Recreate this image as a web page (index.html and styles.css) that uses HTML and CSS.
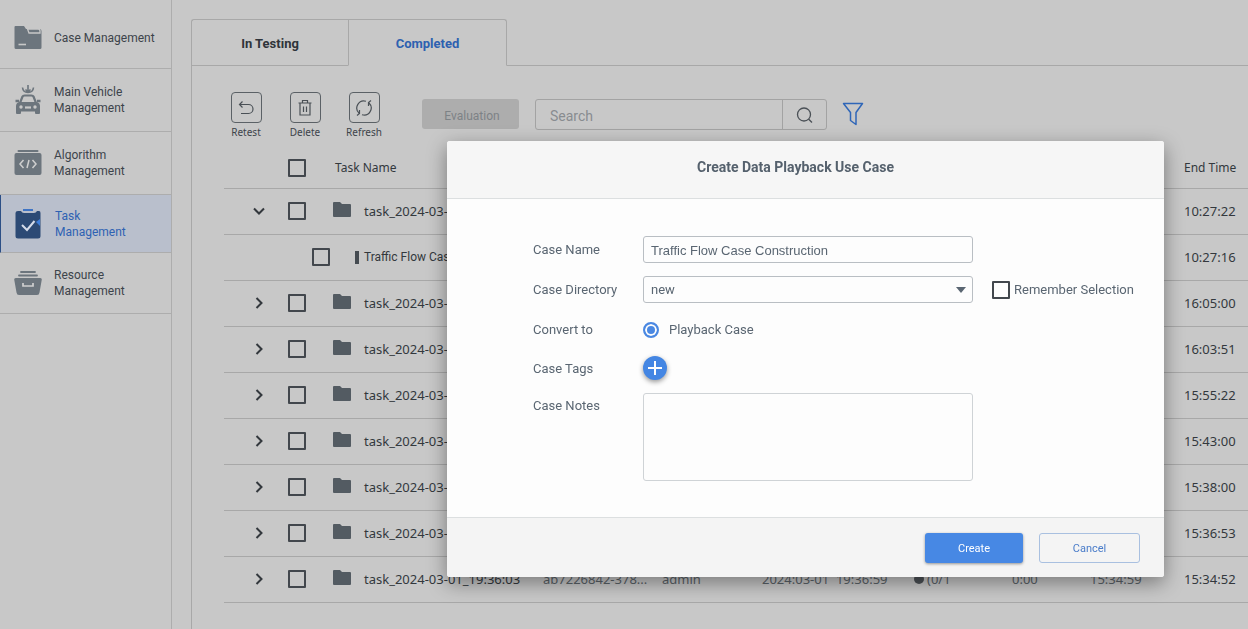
FILE: index.html
```html
<!DOCTYPE html>
<html lang="en">
<head>
  <meta charset="UTF-8" />
  <meta name="viewport" content="width=device-width, initial-scale=1.0" />
  <title>Task Management</title>
  <link rel="stylesheet" href="styles.css">
</head>
<body>

  <!-- shared icons -->
  <svg class="sprite" aria-hidden="true">
    <symbol id="folder" viewBox="0 0 18 15">
      <path d="M1 0H7L9 2H17Q18 2 18 3V14Q18 15 17 15H1Q0 15 0 14V1Q0 0 1 0Z" fill="currentColor" />
    </symbol>
    <symbol id="chevron" viewBox="0 0 12 12">
      <path d="M3.500 1L8.500 6L3.500 11" fill="none" stroke="currentColor" stroke-width="2" />
    </symbol>
  </svg>

  <div class="layout">
    <nav class="sidebar">
      <ul>
        <li><a href="#">
          <svg width="28" height="26" viewBox="0 0 28 26">
            <path d="M1.500 1H10l2 3H25.500Q27.500 4 27.500 6V22.500Q27.500 24 26 24H2Q.5 24 .5 22.500V2Q.5 1 1.500 1Z" fill="#6c757d" />
            <path d="M13.500 4H24Q26 4 26 6V8H15Z" fill="#6c757d" stroke="#c8c8c8" stroke-width="1.300" />
            <path d="M4.500 19.500H12" stroke="#c8c8c8" stroke-width="1.600" />
          </svg>
          <span>Case Management</span>
        </a></li>
        <li><a href="#">
          <svg width="28" height="32" viewBox="0 0 28 32">
            <g fill="none" stroke="#6c757d" stroke-width="1.600">
              <path d="M14 1V8M11.500 5.500L14 8L16.500 5.500M8.500 3.500Q9 8.500 14 8.500Q19 8.500 19.500 3.500" />
              <path d="M6 19L8.500 12.500Q9 11.500 10.500 11.500H17.500Q19 11.500 19.500 12.500L22 19" stroke-width="2.200" />
              <path d="M1.500 17H5M23 17H26.500" stroke-width="2.400" />
            </g>
            <path d="M5 18H23Q26 19 26 22V29Q26 30 25 30H22Q21 30 21 29V27.500H7V29Q7 30 6 30H3Q2 30 2 29V22Q2 19 5 18Z" fill="#6c757d" />
            <circle cx="7" cy="23" r="1.700" fill="#c8c8c8" />
            <circle cx="21" cy="23" r="1.700" fill="#c8c8c8" />
            <path d="M11 23.500H17" stroke="#c8c8c8" stroke-width="2.200" />
          </svg>
          <span>Main Vehicle<br>Management</span>
        </a></li>
        <li><a href="#">
          <svg width="28" height="28" viewBox="0 0 28 28">
            <path d="M4.500 2H23.500" stroke="#6c757d" stroke-width="2" stroke-linecap="round" />
            <rect x=".5" y="4" width="27" height="22" rx="2" fill="#6c757d" />
            <path d="M9.500 11L6 15L9.500 19M18.500 11L22 15L18.500 19M15 11L13 19" fill="none" stroke="#cfcfcf" stroke-width="1.500" />
          </svg>
          <span>Algorithm<br>Management</span>
        </a></li>
        <li class="active"><a href="#">
          <svg width="28" height="30" viewBox="0 0 28 30">
            <path d="M3 2H6Q7 4 9 4H19Q21 4 22 2H24Q25.500 2 25.500 4V27Q25.500 29.500 23 29.500H3Q.5 29.500 .5 27V4Q.5 2 3 2Z" fill="#2c4a75" />
            <path d="M8 1H18" stroke="#3f74c4" stroke-width="2" />
            <path d="M21 13l4-3v7Z" fill="#3f7fdc" />
            <path d="M7 16L12 21L19.500 12" fill="none" stroke="#d5dcea" stroke-width="2" />
          </svg>
          <span>Task<br>Management</span>
        </a></li>
        <li><a href="#">
          <svg width="28" height="26" viewBox="0 0 28 26">
            <path d="M7 2H21M5 5.500H23" stroke="#6c757d" stroke-width="1.800" stroke-linecap="round" />
            <path d="M1.800 8H26.200Q28 8 27.800 9.500L25.500 22.500Q25.200 25 23 25H5Q2.800 25 2.500 22.500L.2 9.500Q0 8 1.800 8Z" fill="#6c757d" />
            <path d="M9 13V16H19V13" fill="none" stroke="#d0d0d0" stroke-width="1.700" />
          </svg>
          <span>Resource<br>Management</span>
        </a></li>
      </ul>
    </nav>

    <main class="content">
      <div class="tabs">
        <button class="tab-button">In Testing</button>
        <button class="tab-button active">Completed</button>
        <div class="tabs-rest"></div>
      </div>

      <div class="panel">
        <div class="toolbar">
          <div class="tools">
            <button class="tool">
              <span class="tool-icon">
                <svg width="16" height="16" viewBox="0 0 16 16"><path d="M4.500 1.500L1.500 4.500L4.500 7.500M1.500 4.500H10.500A4.500 4.500 0 0 1 10.500 13.500H3" /></svg>
              </span>
              Retest
            </button>
            <button class="tool">
              <span class="tool-icon">
                <svg width="16" height="18" viewBox="0 0 16 18"><path d="M1.500 4H14.500M3 4V16H13V4M5.500 4V1.500H10.500V4M6.500 7.500V13M9.500 7.500V13" /></svg>
              </span>
              Delete
            </button>
            <button class="tool">
              <span class="tool-icon">
                <svg width="18" height="18" viewBox="0 0 18 18"><path d="M11 2.300A7 7 0 0 0 4 14M7 15.700A7 7 0 0 0 14 4M4.500 11V14.500L2 16.500M13.500 7V3.500L16 1.500" /></svg>
              </span>
              Refresh
            </button>
          </div>
          <button class="evaluation" disabled>Evaluation</button>
          <form class="search">
            <input type="text" placeholder="Search" aria-label="Search">
            <button type="button" aria-label="Search">
              <svg width="18" height="18" viewBox="0 0 18 18" fill="none" stroke="#4a5056" stroke-width="1.300"><circle cx="8" cy="8.500" r="6.500" /><path d="M12.700 13.200L16 16.500" /></svg>
            </button>
          </form>
          <button class="filter" aria-label="Filter">
            <svg width="22" height="24" viewBox="0 0 22 24" fill="none" stroke="#2f66b8" stroke-width="1.500" stroke-linejoin="round"><path d="M1.500 1.500H20.500L14 10.500V22.500L8.500 18.500V10.500Z" /></svg>
          </button>
        </div>

        <table class="task-table">
          <colgroup>
            <col class="col-expand"><col class="col-check"><col><col class="col-id"><col class="col-user">
            <col class="col-start"><col class="col-status"><col class="col-duration"><col class="col-created"><col class="col-end">
          </colgroup>
          <thead>
            <tr>
              <th></th>
              <th><input type="checkbox" aria-label="Select all"></th>
              <th class="name-head">Task Name</th>
              <th></th><th></th><th></th><th></th><th></th><th></th>
              <th>End Time</th>
            </tr>
          </thead>
          <tbody id="taskList"></tbody>
        </table>
      </div>
    </main>
  </div>

  <div class="overlay">
    <div class="modal" role="dialog" aria-labelledby="modalTitle">
      <h2 id="modalTitle">Create Data Playback Use Case</h2>
      <form class="modal-body">
        <label for="caseName">Case Name</label>
        <input type="text" id="caseName" value="Traffic Flow Case Construction">
        <span></span>

        <label for="caseDirectory">Case Directory</label>
        <div class="select-box">
          <select id="caseDirectory">
            <option>new</option>
          </select>
          <svg width="10" height="6" viewBox="0 0 10 6"><path d="M0 0H10L5 6Z" fill="#5a6672" /></svg>
        </div>
        <label class="remember"><input type="checkbox"> Remember Selection</label>

        <span>Convert to</span>
        <label class="radio"><input type="radio" name="convert" checked> Playback Case</label>
        <span></span>

        <span>Case Tags</span>
        <button type="button" class="add-tag" aria-label="Add tag">
          <svg width="14" height="14" viewBox="0 0 14 14"><path d="M7 0V14M0 7H14" stroke="#fff" stroke-width="2" /></svg>
        </button>
        <span></span>

        <label for="caseNotes" class="notes-label">Case Notes</label>
        <textarea id="caseNotes"></textarea>
        <span></span>
      </form>
      <div class="modal-footer">
        <button class="create">Create</button>
        <button class="cancel">Cancel</button>
      </div>
    </div>
  </div>

<script>
const tasks = [
  { name: 'task_2024-03-', end: '10:27:22', open: true },
  { name: 'Traffic Flow Case', end: '10:27:16', child: true },
  { name: 'task_2024-03-', end: '16:05:00' },
  { name: 'task_2024-03-', end: '16:03:51' },
  { name: 'task_2024-03-', end: '15:55:22' },
  { name: 'task_2024-03-', end: '15:43:00' },
  { name: 'task_2024-03-', end: '15:38:00' },
  { name: 'task_2024-03-', end: '15:36:53' },
  {
    name: 'task_2024-03-01_19:36:03', id: 'ab7226842-378...', user: 'admin', start: '2024:03-01&nbsp; 19:36:59',
    status: '<i class="dot"></i>(0/1', duration: '0:00', created: '15:34:59', end: '15:34:52'
  }
];

function renderTasks() {
  const list = document.getElementById('taskList');
  tasks.forEach(t => {
    const row = document.createElement('tr');
    if (t.child) row.className = 'child';
    const arrow = t.child ? '' : `<button class="expand ${t.open ? 'open' : ''}" aria-label="Expand"><svg width="12" height="12"><use href="#chevron" /></svg></button>`;
    const icon = t.child ? '<i class="bar"></i>' : '<svg width="18" height="15"><use href="#folder" /></svg>';
    row.innerHTML = `
      <td>${arrow}</td>
      <td><input type="checkbox" aria-label="Select task"></td>
      <td><div class="name">${icon}<span>${t.name}</span></div></td>
      <td class="muted">${t.id || ''}</td>
      <td class="muted">${t.user || ''}</td>
      <td class="muted">${t.start || ''}</td>
      <td class="muted">${t.status || ''}</td>
      <td class="muted">${t.duration || ''}</td>
      <td class="muted">${t.created || ''}</td>
      <td>${t.end}</td>`;
    list.appendChild(row);
  });
}

renderTasks();
</script>

</body>
</html>
```
FILE: styles.css
```css
* { margin: 0; padding: 0; box-sizing: border-box; }

body {
  font-family: Roboto, sans-serif;
  font-size: 13px;
  background: #c8c8c8;
  color: #3d444b;
  overflow: hidden;
}

button, input, select, textarea {
  font: inherit;
  color: inherit;
  background: none;
  border: none;
  outline: none;
}

button { cursor: pointer; }
svg { display: block; flex: none; }
.sprite { display: none; }

.layout {
  display: flex;
  min-height: 100vh;
}

/* sidebar */
.sidebar {
  flex: none;
  width: 172px;
  border-right: 1px solid #adadad;
}

.sidebar ul { list-style: none; }

.sidebar li {
  height: 63px;
  border-bottom: 1px solid #adadad;
}

.sidebar li:first-child {
  height: 69px;
  padding-top: 8px;
}

.sidebar li:last-child { height: 61px; }

.sidebar a {
  display: flex;
  align-items: center;
  gap: 12px;
  height: 100%;
  padding-left: 14px;
  color: #3d444b;
  font-size: 12px;
  line-height: 16px;
  text-decoration: none;
  white-space: nowrap;
}

.sidebar li.active {
  height: 58px;
  background: #b9bfcc;
  border-left: 1px solid #2c4f86;
}

.sidebar .active a { color: #2e62b3; }

/* tabs */
.content {
  flex: 1;
  min-width: 0;
  padding: 19px 0 0 19px;
}

.tabs { display: flex; }

.tab-button {
  width: 157px;
  height: 47px;
  border: 1px solid #a8a8a8;
  border-right: none;
  border-radius: 3px 0 0 0;
  font-weight: 700;
  color: #2f343a;
  padding-top: 2px;
}

.tab-button.active {
  width: 159px;
  border-right: 1px solid #a8a8a8;
  border-bottom-color: transparent;
  border-radius: 0 3px 0 0;
  color: #2d61b0;
}

.tabs-rest {
  flex: 1;
  border-bottom: 1px solid #a8a8a8;
}

.panel {
  min-height: calc(100vh - 66px);
  border-left: 1px solid #a8a8a8;
  padding: 26px 0 0 32px;
}

/* toolbar */
.toolbar {
  display: flex;
  align-items: flex-start;
  padding-bottom: 7px;
}

.tools {
  display: flex;
  gap: 15px;
  width: 198px;
}

.tool {
  display: flex;
  flex-direction: column;
  align-items: center;
  gap: 1px;
  width: 44px;
  font-family: "Noto Sans", sans-serif;
  font-size: 10px;
  line-height: 17px;
}

.tool-icon {
  display: flex;
  align-items: center;
  justify-content: center;
  width: 31px;
  height: 31px;
  border: 1px solid #5b6166;
  border-radius: 4px;
}

.tool-icon svg {
  fill: none;
  stroke: #4a5056;
  stroke-width: 1.2;
}

.evaluation {
  width: 97px;
  height: 30px;
  margin-top: 7px;
  padding: 3px 0 0 3px;
  border-radius: 3px;
  background: #adadad;
  color: #7d8286;
  font-size: 12px;
}

.search {
  display: flex;
  width: 292px;
  height: 31px;
  margin: 7px 0 0 16px;
  border: 1px solid #a3a3a3;
  border-radius: 3px;
}

.search input {
  flex: 1;
  min-width: 0;
  padding: 2px 0 0 14px;
  font-size: 14px;
}

.search input::placeholder { color: #888c90; }

.search button {
  width: 44px;
  display: flex;
  align-items: center;
  justify-content: center;
  border-left: 1px solid #a3a3a3;
}

.filter { margin: 10px 0 0 15px; }

/* task table */
.task-table {
  width: 100%;
  table-layout: fixed;
  border-collapse: collapse;
  font-family: "Noto Sans", sans-serif;
  color: #33383d;
}

.col-expand { width: 64px; }
.col-check { width: 45px; }
.col-id { width: 119px; }
.col-user { width: 100px; }
.col-start { width: 152px; }
.col-status { width: 98px; }
.col-duration { width: 78px; }
.col-created { width: 94px; }
.col-end { width: 64px; }

.task-table th {
  height: 40px;
  text-align: left;
  font-size: 12px;
  font-weight: normal;
  border-bottom: 1px solid #a8a8a8;
}

.task-table td {
  height: 46px;
  border-bottom: 1px solid #a8a8a8;
  white-space: nowrap;
}

.task-table .name-head { padding-left: 2px; }
.task-table .muted { color: #5b6369; }

input[type="checkbox"] {
  appearance: none;
  display: block;
  width: 18px;
  height: 18px;
  border: 2px solid #42474d;
  border-radius: 1px;
}

.child input[type="checkbox"] { margin-left: 24px; }

.expand {
  display: block;
  margin-left: 29px;
}

.expand.open { transform: rotate(90deg); }

.name {
  display: flex;
  align-items: center;
  gap: 13px;
}

.name svg {
  color: #535b62;
  margin-bottom: 4px;
}

.child .name {
  gap: 5px;
  padding-left: 22px;
  font-family: Roboto, sans-serif;
  font-size: 12px;
}

.bar {
  width: 4px;
  height: 13px;
  background: #454b51;
}

.dot {
  display: inline-block;
  width: 10px;
  height: 10px;
  margin-right: 3px;
  border-radius: 50%;
  background: #4d5257;
}

/* modal */
.overlay {
  position: fixed;
  inset: 0;
  padding: 141px 84px 0 447px;
}

.modal {
  overflow: hidden;
  border-radius: 3px;
  background: #fdfdfd;
  box-shadow: 0 6px 20px rgba(0, 0, 0, 0.4);
  color: #5a6672;
}

.modal h2 {
  height: 58px;
  padding-right: 20px;
  border-bottom: 1px solid #dcdfe0;
  background: #f6f6f6;
  font-size: 14px;
  line-height: 52px;
  text-align: center;
  color: #55616d;
}

.modal-body {
  display: grid;
  grid-template-columns: 97px 330px auto;
  gap: 13px;
  align-items: center;
  padding: 37px 30px 36px 86px;
}

.modal-body input[type="text"], .select-box {
  width: 100%;
  height: 27px;
  border: 1px solid #b9bec3;
  border-radius: 3px;
}

.modal-body input[type="text"] {
  padding: 2px 7px 0;
  font-family: "Liberation Sans", sans-serif;
}

.select-box {
  position: relative;
}

.select-box select {
  appearance: none;
  display: block;
  width: 100%;
  height: 25px;
  padding-left: 7px;
}

.select-box svg {
  position: absolute;
  top: 10px;
  right: 6px;
  pointer-events: none;
}

.remember, .radio {
  display: flex;
  align-items: center;
}

.remember {
  gap: 4px;
  padding-left: 6px;
  white-space: nowrap;
}

.radio {
  gap: 10px;
  height: 27px;
}

.radio input {
  appearance: none;
  width: 16px;
  height: 16px;
  border: 2px solid #4a88e2;
  border-radius: 50%;
  background: #4a88e2;
  box-shadow: inset 0 0 0 2px #fdfdfd;
}

.add-tag {
  display: flex;
  align-items: center;
  justify-content: center;
  width: 24px;
  height: 24px;
  border-radius: 50%;
  background: #4486e3;
  box-shadow: 0 2px 5px rgba(0, 0, 0, 0.4);
}

.notes-label {
  align-self: start;
  padding-top: 5px;
}

.modal-body textarea {
  display: block;
  width: 100%;
  height: 88px;
  padding: 7px;
  border: 1px solid #cfd3d6;
  border-radius: 3px;
  resize: none;
}

.modal-footer {
  display: flex;
  justify-content: flex-end;
  gap: 16px;
  padding: 15px 24px 14px;
  border-top: 1px solid #dcdfe0;
  background: #f4f4f4;
}

.modal-footer button {
  width: 98px;
  height: 30px;
  padding-top: 1px;
  border-radius: 3px;
  font-size: 11px;
}

.modal-footer .create {
  background: #4788e4;
  color: #fff;
  box-shadow: 0 1px 3px rgba(0, 0, 0, 0.4);
}

.modal-footer .cancel {
  width: 101px;
  border: 1px solid #a9c0e0;
  color: #4a7cc9;
}
```
